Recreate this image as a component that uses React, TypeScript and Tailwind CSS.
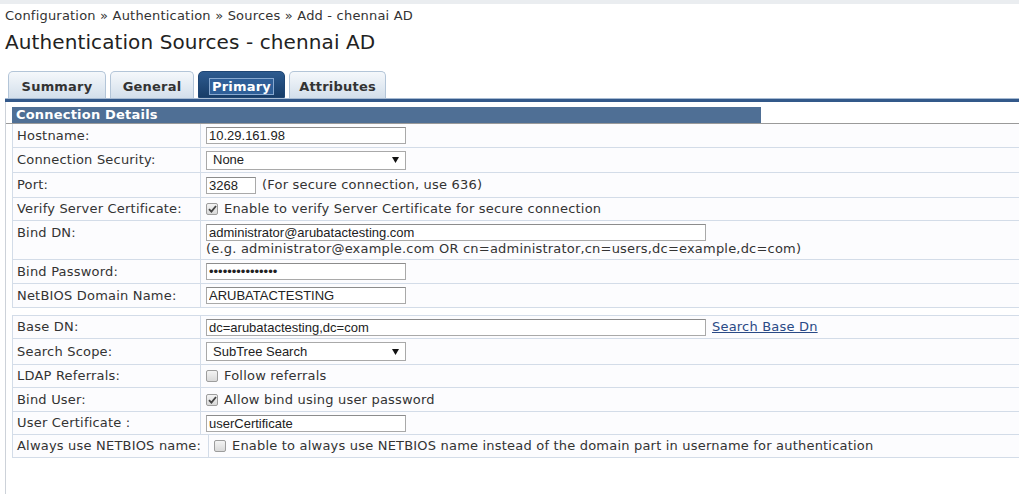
import React from 'react';

const verdana = "font-['DejaVu_Sans',Verdana,sans-serif]";
const arial = "font-['Liberation_Sans',Arial,sans-serif]";

const Tab: React.FC<{ label: string; width: string; active?: boolean }> = ({ label, width, active }) => (
  <div
    className={`${width} h-[27px] pt-[4px] rounded-t-[5px] border flex items-center justify-center text-[13px] font-bold ${
      active
        ? 'bg-gradient-to-b from-[#2d5b90] to-[#183d68] border-[#1f4674] text-white'
        : 'bg-gradient-to-b from-[#f5f8fb] to-[#d3dfeb] border-[#b3c5d8] border-b-0 text-[#333]'
    }`}
  >
    {active ? (
      <span className="px-[2px] leading-[15px] border border-[#87a8d0] bg-[#2f5f98]">{label}</span>
    ) : (
      label
    )}
  </div>
);

const TextBox: React.FC<{ value: string; width: string }> = ({ value, width }) => (
  <input
    readOnly
    value={value}
    className={`${width} ${arial} h-[17px] border border-[#a9a9a9] border-t-[#8c8c8c] bg-white px-[2px] py-0 text-[13px] leading-[15px] tracking-normal text-[#222] outline-none`}
  />
);

const SelectBox: React.FC<{ value: string }> = ({ value }) => (
  <div
    className={`${arial} w-[200px] h-[19px] border border-[#a9a9a9] bg-white flex items-center justify-between pl-[6px] pr-[6px] text-[13px] tracking-normal text-[#222]`}
  >
    <span>{value}</span>
    <svg width="7" height="6" viewBox="0 0 7 6">
      <path d="M0 0H7L3.5 6Z" fill="#111" />
    </svg>
  </div>
);

const Check: React.FC<{ checked?: boolean }> = ({ checked }) => (
  <span className="w-[12px] h-[12px] shrink-0 rounded-[2px] border border-[#9d9d9d] bg-gradient-to-b from-[#f4f4f4] to-[#d9d9d9] flex items-center justify-center">
    {checked && (
      <svg width="9" height="8" viewBox="0 0 9 8">
        <path d="M1 4.2L3.4 6.6L8 1" stroke="#444" strokeWidth="1.8" fill="none" />
      </svg>
    )}
  </span>
);

interface RowProps {
  label: string;
  height: string;
  labelWidth?: string;
  top?: boolean;
  first?: boolean;
  children: React.ReactNode;
}

const Row: React.FC<RowProps> = ({ label, height, labelWidth = 'w-[188px]', top, first, children }) => (
  <div
    className={`${height} flex border-l border-b border-[#d3dce8] bg-[#fcfcfe] ${first ? 'border-t' : ''}`}
  >
    <div
      className={`${labelWidth} shrink-0 border-r border-[#d3dce8] pl-[4px] flex ${
        top ? 'items-start pt-[3px] leading-[17px]' : 'items-center'
      }`}
    >
      {label}
    </div>
    <div className={`flex-1 pl-[5px] flex ${top ? 'flex-col pt-[3px]' : 'items-center'}`}>{children}</div>
  </div>
);

export default function App() {
  return (
    <div className={`${verdana} w-full h-[494px] bg-white overflow-hidden text-[#333] tracking-[0.2px]`}>
      <div className="h-[4px] bg-[#eaedf0]" />
      <div className="mt-[4px] pl-[5px] text-[13px] leading-[16px]">
        Configuration » Authentication » Sources » Add - chennai AD
      </div>
      <div className="mt-[6px] pl-[5px] text-[20px] leading-[24px] text-[#222] tracking-[0.1px]">
        Authentication Sources - chennai AD
      </div>

      <div className="mt-[17px] ml-[5px]">
        <div className="flex items-end gap-[4px] pl-[3px]">
          <Tab label="Summary" width="w-[98px]" />
          <Tab label="General" width="w-[84px]" />
          <Tab label="Primary" width="w-[87px]" active />
          <Tab label="Attributes" width="w-[97px]" />
        </div>
        <div className="h-[4px] border-t border-[#a7bbd3] bg-[#33598a]" />

        <div className="border-l border-[#cdd2d9] h-[400px] pt-[5px] text-[13px]">
          <div className="border-b border-[#9a9a9a] pl-[6px]">
            <div className="w-[749px] h-[16px] bg-[#4f6f95] text-white font-bold leading-[16px] pl-[4px]">
              Connection Details
            </div>
          </div>

          <div className="pl-[6px]">
            <Row label="Hostname:" height="h-[24px]">
              <TextBox value="10.29.161.98" width="w-[200px]" />
            </Row>
            <Row label="Connection Security:" height="h-[25px]">
              <SelectBox value="None" />
            </Row>
            <Row label="Port:" height="h-[25px]">
              <TextBox value="3268" width="w-[50px]" />
              <span className="ml-[6px]">(For secure connection, use 636)</span>
            </Row>
            <Row label="Verify Server Certificate:" height="h-[23px]">
              <Check checked />
              <span className="ml-[6px]">Enable to verify Server Certificate for secure connection</span>
            </Row>
            <Row label="Bind DN:" height="h-[39px]" top>
              <TextBox value="administrator@arubatactesting.com" width="w-[500px]" />
              <span className="leading-[16px]">
                (e.g. administrator@example.com OR cn=administrator,cn=users,dc=example,dc=com)
              </span>
            </Row>
            <Row label="Bind Password:" height="h-[24px]">
              <TextBox value="•••••••••••••••" width="w-[200px]" />
            </Row>
            <Row label="NetBIOS Domain Name:" height="h-[24px]">
              <TextBox value="ARUBATACTESTING" width="w-[200px]" />
            </Row>

            <div className="h-[7px]" />

            <Row label="Base DN:" height="h-[24px]" first>
              <TextBox value="dc=arubatactesting,dc=com" width="w-[500px]" />
              <a className="ml-[6px] text-[#2a4a86] underline cursor-pointer">Search Base Dn</a>
            </Row>
            <Row label="Search Scope:" height="h-[26px]">
              <SelectBox value="SubTree Search" />
            </Row>
            <Row label="LDAP Referrals:" height="h-[23px]">
              <Check />
              <span className="ml-[6px]">Follow referrals</span>
            </Row>
            <Row label="Bind User:" height="h-[24px]">
              <Check checked />
              <span className="ml-[6px]">Allow bind using user password</span>
            </Row>
            <Row label="User Certificate :" height="h-[23px]">
              <TextBox value="userCertificate" width="w-[200px]" />
            </Row>
            <Row label="Always use NETBIOS name:" height="h-[23px]" labelWidth="w-[196px]">
              <Check />
              <span className="ml-[6px]">
                Enable to always use NETBIOS name instead of the domain part in username for authentication
              </span>
            </Row>
          </div>
        </div>
      </div>
    </div>
  );
}
